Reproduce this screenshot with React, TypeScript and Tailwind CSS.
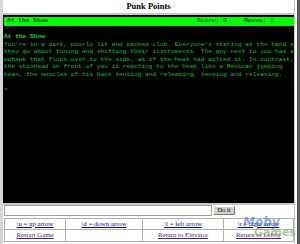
export default function App() {
  const mono = { fontFamily: '"Liberation Mono", "DejaVu Sans Mono", monospace' };
  const serif = { fontFamily: '"Liberation Serif", "Times New Roman", serif' };
  const lines = [
    "You're in a dark, poorly lit and packed club. Everyone's staring at the band as",
    'they go about tuning and shifting their instruments. The guy next to you has a',
    'mohawk that flops over to the side, as if the heat had wilted it. In contrast,',
    'the skinhead in front of you is reacting to the heat like a Mexican jumping',
    'bean, the muscles of his back tensing and releasing, tensing and releasing.',
  ];

  return (
    <div className="relative w-[300px] h-[244px] flex bg-white overflow-hidden">
      <div className="w-[3px] bg-[#d6d6d6]" />
      <div className="flex-1 flex flex-col min-w-0">
        {/* title */}
        <div className="h-[13px] flex items-center justify-center text-[8.5px] font-bold text-black" style={serif}>
          Punk Points
        </div>
        <div className="h-[2px] bg-[#c8c8c8]" />

        {/* terminal */}
        <div className="h-[188px] bg-black pl-[1px] pt-[2px] overflow-hidden" style={mono}>
          <div className="h-[9px] bg-[#00ff00] flex items-center text-[6.2px] text-black whitespace-pre leading-none">
            <span className="pl-[3px] w-[193px]">At the Show</span>
            <span className="w-[47px]">Score: 0</span>
            <span>Moves: 1</span>
          </div>
          <div className="pt-[7px] text-[6.2px] leading-[7.5px] text-[#00c800] whitespace-pre">
            <div className="font-bold text-[#00e000]">At the Show</div>
            {lines.map((l) => (
              <div key={l}>{l}</div>
            ))}
            <div>&nbsp;</div>
            <div>&gt;</div>
          </div>
        </div>

        {/* input row */}
        <div className="h-[2px] bg-[#c8c8c8]" />
        <div className="h-[11px] flex items-stretch pl-[1px] pr-[1px]">
          <div className="w-[208px] border border-[#a0a0a0] bg-white" />
          <div className="ml-[1px] mt-[1px] w-[22px] h-[9px] bg-[#d4d0c8] border border-[#ffffff] border-r-[#808080] border-b-[#808080] flex items-center justify-center text-[6.5px] text-black leading-none" style={serif}>
            Do it
          </div>
        </div>
        <div className="h-[2px]" />

        {/* link table */}
        <div
          className="grid grid-cols-[61px_77px_81px_1fr] border border-[#b0b0b0] text-[6.8px] leading-none ml-[1px]"
          style={serif}
        >
          <div className="h-[11px] border-r border-b border-[#b0b0b0] flex items-center justify-center">
            <span className="underline text-[#0000ee]">\u = up arrow</span>
          </div>
          <div className="h-[11px] border-r border-b border-[#b0b0b0] flex items-center justify-center">
            <span className="underline text-[#0000ee]">\d = down arrow</span>
          </div>
          <div className="h-[11px] border-r border-b border-[#b0b0b0] flex items-center justify-center">
            <span className="underline text-[#0000ee]">\l = left arrow</span>
          </div>
          <div className="h-[11px] border-b border-[#b0b0b0] flex items-center justify-center">
            <span className="underline text-[#0000ee]">\r = right arrow</span>
          </div>
          <div className="h-[11px] border-r border-[#b0b0b0] flex items-center justify-center">
            <span className="underline text-[#551a8b]">Restart Game</span>
          </div>
          <div className="h-[11px] border-r border-[#b0b0b0]" />
          <div className="h-[11px] border-r border-[#b0b0b0] flex items-center justify-center">
            <span className="underline text-[#551a8b]">Return to Elevator</span>
          </div>
          <div className="h-[11px] flex items-center justify-center">
            <span className="underline text-[#551a8b]">Return to Lobby</span>
          </div>
        </div>
      </div>
      <div className="w-[6px] flex">
        <div className="w-[1px] bg-[#c8c8c8]" />
        <div className="w-[2px] bg-white" />
        <div className="flex-1 bg-[#5a5a5a]" />
      </div>

      {/* MobyGames watermark */}
      <div
        className="absolute left-[243px] top-[216px] leading-none opacity-60 pointer-events-none select-none"
        style={{ fontFamily: '"DejaVu Sans", sans-serif' }}
      >
        <div className="text-[12px] font-bold italic text-[#4a78c8]">Moby</div>
        <div className="text-[11px] font-bold text-[#7aa860] -mt-[1px] ml-[11px]">Games</div>
      </div>
    </div>
  );
}
